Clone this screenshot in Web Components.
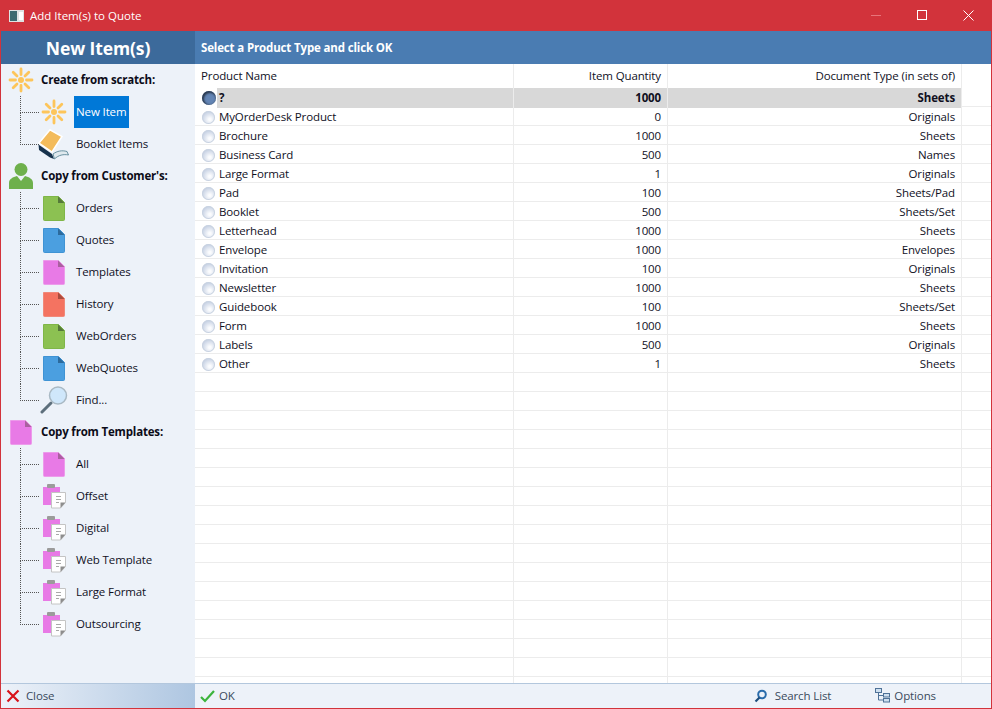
<!DOCTYPE html>
<html>
<head>
<meta charset="utf-8">
<title>Add Item(s) to Quote</title>
<style>
  html, body { margin: 0; height: 100%; }
  body { font: 11.5px "Open Sans", sans-serif; letter-spacing: -0.12px; color: #10101e; overflow: hidden; }
</style>
</head>
<body>
<quote-window></quote-window>
<script>
const icons = {
  spark: `<svg viewBox="0 0 26 26" width="26" height="26"><g stroke="#fdc55a" stroke-width="2.800" stroke-linecap="round"><path d="M13 2v5.500M13 18.500V24M2 13h5.500M18.500 13H24M5.200 5.200l3.800 3.800M17 17l3.800 3.800M5.200 20.800 9 17M17 9l3.800-3.800"/></g><circle cx="13" cy="13" r="3" fill="#fdc55a"/></svg>`,
  book: `<svg viewBox="0 0 31 31" width="31" height="31"><path d="M12 .8 1 14l13 9L24 7.500z" fill="#f3bb5b" stroke="#fff" stroke-width="1.500"/><path d="M.5 15.500 14 25l2 5-4-1.500L1 21z" fill="#17324d"/><path d="M15 25c4-3 9-4 14-2.500l1.500 3.500c-5-1-10 0-14 4z" fill="#dfe9ee" stroke="#4a7a8c" stroke-width=".8"/></svg>`,
  user: `<svg viewBox="0 0 24 28" width="24" height="28"><circle cx="12" cy="7.500" r="6.500" fill="#6eb04c"/><path d="M0 27v-6c0-4 4-6 8-7l4 5 4-5c4 1 8 3 8 7v6z" fill="#6eb04c"/></svg>`,
  glass: `<svg viewBox="0 0 28 28" width="28" height="28"><path d="M2 26l9-9" stroke="#5d6f7c" stroke-width="3" stroke-linecap="round"/><circle cx="18" cy="9.500" r="8.500" fill="#cfe7fb" stroke="#a9b9c4" stroke-width="1.500"/></svg>`,
  clip: `<svg viewBox="0 0 24 25" width="24" height="25"><rect x="1" y="3" width="17" height="18" fill="#e87ae6"/><rect x="5" y="0" width="8" height="4" rx="1" fill="#9b9b9b"/><path d="M9.500 8.500h14v10l-5 5.500h-9z" fill="#fff" stroke="#c4c4c4"/><path d="M18.500 24v-5.500h5z" fill="#8d8d8d"/><path d="M14 12.500h5M14 15.500h5M14 18.500h3" stroke="#a9a9a9"/></svg>`,
};
const sheet = (fill, fold, edge) => `<svg viewBox="0 0 24 27" width="24" height="27"><path d="M1.500 1.500h15l6 6v17a1 1 0 0 1-1 1h-19a1 1 0 0 1-1-1z" fill="${fill}" stroke="${edge}"/><path d="M16 1.500l6.500 6.500H16z" fill="${fold}"/></svg>`;
icons.green = sheet('#8cc152', '#55793a', '#7fb648');
icons.blue = sheet('#4b9fe0', '#2c6a9c', '#3f93d4');
icons.pink = sheet('#e87ae6', '#a9609f', '#ec9bea');
icons.red = sheet('#f47361', '#a84c3f', '#f0897a');

class TitleBar extends HTMLElement {
  constructor() {
    super();
    this.attachShadow({ mode: 'open' });
    this.shadowRoot.innerHTML = `
      <style>
        :host { display: flex; align-items: center; height: 31px; background: #d2333b; color: #fff; letter-spacing: 0; }
        .app { margin: 0 6px 0 8px; display: block; }
        .name { flex: 1; }
        .btn { width: 46px; height: 30px; margin-bottom: 1px; display: flex; align-items: center; justify-content: center; }
      </style>
      <svg class="app" width="15" height="12" viewBox="0 0 15 12"><rect width="15" height="12" fill="#dfe3e3"/><rect x="1" y="1" width="7" height="10" fill="#3d6b70"/><rect x="10" y="2" width="4" height="8" fill="#fff"/></svg>
      <span class="name"><slot></slot></span>
      <span class="btn"><svg width="10" height="10"><path d="M0 5.500h10" stroke="#e8747a"/></svg></span>
      <span class="btn"><svg width="10" height="10"><rect x=".5" y=".5" width="9" height="9" fill="none" stroke="#fff"/></svg></span>
      <span class="btn"><svg width="11" height="11"><path d="M.5.500l10 10M10.500.500l-10 10" stroke="#fff"/></svg></span>
    `;
  }
}

class TreeGroup extends HTMLElement {
  constructor() {
    super();
    this.attachShadow({ mode: 'open' });
    this.shadowRoot.innerHTML = `
      <style>
        :host { display: block; }
        .head { display: flex; align-items: center; height: 32px; font-weight: 700; letter-spacing: -0.18px; padding-left: 6px; gap: 7px; color: #0c0c18; }
        .icon { width: 27px; display: flex; justify-content: center; }
        #t { padding-bottom: 1px; }
        .kids { display: block; margin-left: 19px; }
      </style>
      <div class="head"><span class="icon" id="i"></span><span id="t"></span></div>
      <div class="kids"><slot></slot></div>
    `;
    this.shadowRoot.getElementById('i').innerHTML = icons[this.getAttribute('icon')];
    this.shadowRoot.getElementById('t').textContent = this.getAttribute('label');
  }
}

class TreeItem extends HTMLElement {
  constructor() {
    super();
    this.attachShadow({ mode: 'open' });
    this.shadowRoot.innerHTML = `
      <style>
        :host { display: flex; align-items: center; height: 32px; }
        .branch { width: 19px; height: 32px; flex: none; display: grid; grid-template-rows: 17px 15px; }
        .top { border-left: 1px dotted #555; border-bottom: 1px dotted #555; }
        .bot { border-left: 1px dotted #555; }
        :host(:last-child) .bot { border-left: 0; }
        .icon { width: 29px; flex: none; display: flex; justify-content: center; }
        .icon svg { flex: none; }
        .txt { margin-left: 6px; padding: 0 3px 2px 2px; height: 32px; box-sizing: border-box; display: flex; align-items: center; }
        :host([selected]) .txt { background: #0078d7; color: #fff; }
      </style>
      <span class="branch"><span class="top"></span><span class="bot"></span></span><span class="icon" id="i"></span><span class="txt"><slot></slot></span>
    `;
    this.shadowRoot.getElementById('i').innerHTML = icons[this.getAttribute('icon')];
  }
}

class SideBar extends HTMLElement {
  constructor() {
    super();
    this.attachShadow({ mode: 'open' });
    this.shadowRoot.innerHTML = `
      <style>
        :host { display: block; width: 194px; background: #edf2f9; }
        h1 { margin: 0; height: 33px; line-height: 34px; text-align: center; background: #3c6a9b; color: #fff; font-size: 17.5px; font-weight: 700; letter-spacing: -0.1px; }
      </style>
      <h1>New Item(s)</h1>
      <slot></slot>
    `;
  }
}

class GridRow extends HTMLElement {
  constructor() {
    super();
    this.attachShadow({ mode: 'open' });
    this.shadowRoot.innerHTML = `
      <style>
        :host { display: grid; grid-template-columns: 319px 154px 294px 29px; height: 19px; line-height: 20px; box-sizing: border-box; border-bottom: 1px solid #ececec; }
        .c { border-right: 1px solid #ececec; padding: 0 6px 0 5px; white-space: nowrap; }
        .n { display: flex; align-items: center; padding: 0 0 0 7px; gap: 4px; }
        .r { text-align: right; }
        .radio { width: 13px; height: 13px; border-radius: 50%; background: radial-gradient(circle at 60% 65%, #fbfcfe 10%, #b4c2da 90%); box-shadow: inset 0 0 0 1px #c9d3e1; flex: none; }
        :host([selected]) { font-weight: 700; }
        :host([selected]) .n { gap: 1px; background: linear-gradient(90deg, #fff 22px, #d8d8d8 22px); }
        :host([selected]) .radio { width: 14px; height: 14px; background: #6385b5; box-shadow: inset 1px 1px 2px 1px #2b3a50; }
        :host([selected]) .g { padding-left: 2px; }
        :host([selected]) .r { background: #d8d8d8; }
      </style>
      <div class="c n">${this.hasAttribute('blank') ? '' : '<span class="radio"></span>'}<span class="g">${this.getAttribute('name') || ''}</span></div>
      <div class="c r">${this.getAttribute('qty') || ''}</div>
      <div class="c r">${this.getAttribute('doc') || ''}</div>
      <div class="c" style="border:0"></div>
    `;
  }
}

class ProductGrid extends HTMLElement {
  constructor() {
    super();
    this.attachShadow({ mode: 'open' });
    const rows = [
      ['MyOrderDesk Product', 0, 'Originals'], ['Brochure', 1000, 'Sheets'], ['Business Card', 500, 'Names'],
      ['Large Format', 1, 'Originals'], ['Pad', 100, 'Sheets/Pad'], ['Booklet', 500, 'Sheets/Set'],
      ['Letterhead', 1000, 'Sheets'], ['Envelope', 1000, 'Envelopes'], ['Invitation', 100, 'Originals'],
      ['Newsletter', 1000, 'Sheets'], ['Guidebook', 100, 'Sheets/Set'], ['Form', 1000, 'Sheets'],
      ['Labels', 500, 'Originals'], ['Other', 1, 'Sheets'],
    ];
    const blanks = Array.from({ length: 17 }).map(() => '<grid-row blank></grid-row>').join('');
    this.shadowRoot.innerHTML = `
      <style>
        :host { display: block; flex: 1; min-height: 0; overflow: hidden; background: #fff; }
        .hdr { display: grid; grid-template-columns: 319px 154px 294px 29px; height: 24px; line-height: 24px; }
        .hdr div { padding: 0 6px; border-right: 1px solid #ececec; }
        .hdr div:last-child { border: 0; }
        .r { text-align: right; }
      </style>
      <div class="hdr"><div>Product Name</div><div class="r">Item Quantity</div><div class="r">Document Type (in sets of)</div><div></div></div>
      <grid-row selected name="?" qty="1000" doc="Sheets"></grid-row>
      ${rows.map((r) => `<grid-row name="${r[0]}" qty="${r[1]}" doc="${r[2]}"></grid-row>`).join('')}
      ${blanks}
    `;
  }
}

class BarButton extends HTMLElement {
  constructor() {
    super();
    this.attachShadow({ mode: 'open' });
    this.shadowRoot.innerHTML = `
      <style>
        :host { display: inline-flex; align-items: center; gap: var(--gap, 5px); color: #3a4a5c; padding-bottom: 1px; }
      </style>
      <slot name="icon"></slot><slot></slot>
    `;
  }
}

class QuoteWindow extends HTMLElement {
  constructor() {
    super();
    this.attachShadow({ mode: 'open' });
    this.shadowRoot.innerHTML = `
      <style>
        :host { display: flex; flex-direction: column; width: 992px; height: 709px; box-sizing: border-box; border: solid #d2333b; border-width: 0 1px 1px; background: #fff; }
        .main { flex: 1; display: flex; min-height: 0; }
        .right { flex: 1; display: flex; flex-direction: column; min-width: 0; }
        .prompt { height: 33px; line-height: 33px; background: #4a7cb2; color: #fff; font-weight: 700; letter-spacing: -0.15px; padding-left: 6px; }
        .foot { display: flex; height: 25px; box-sizing: border-box; border-top: 1px solid #b3c7dd; background: #edf2f9; }
        .left { width: 194px; display: flex; align-items: center; padding-left: 5px; box-sizing: border-box; background: linear-gradient(90deg, #edf2f9, #aec6e1); --gap: 6px; }
        .rest { flex: 1; display: flex; align-items: center; padding-left: 5px; --gap: 3px; }
        .search { margin-left: 519px; --gap: 8px; }
        .options { margin-left: 44px; --gap: 4px; }
      </style>
      <title-bar>Add Item(s) to Quote</title-bar>
      <div class="main">
        <side-bar>
          <tree-group icon="spark" label="Create from scratch:">
            <tree-item icon="spark" selected>New Item</tree-item>
            <tree-item icon="book">Booklet Items</tree-item>
          </tree-group>
          <tree-group icon="user" label="Copy from Customer's:">
            <tree-item icon="green">Orders</tree-item>
            <tree-item icon="blue">Quotes</tree-item>
            <tree-item icon="pink">Templates</tree-item>
            <tree-item icon="red">History</tree-item>
            <tree-item icon="green">WebOrders</tree-item>
            <tree-item icon="blue">WebQuotes</tree-item>
            <tree-item icon="glass">Find...</tree-item>
          </tree-group>
          <tree-group icon="pink" label="Copy from Templates:">
            <tree-item icon="pink">All</tree-item>
            <tree-item icon="clip">Offset</tree-item>
            <tree-item icon="clip">Digital</tree-item>
            <tree-item icon="clip">Web Template</tree-item>
            <tree-item icon="clip">Large Format</tree-item>
            <tree-item icon="clip">Outsourcing</tree-item>
          </tree-group>
        </side-bar>
        <div class="right">
          <div class="prompt">Select a Product Type and click OK</div>
          <product-grid></product-grid>
        </div>
      </div>
      <div class="foot">
        <div class="left"><bar-button><svg slot="icon" width="14" height="14"><path d="M1.500 1.500l11 11M12.500 1.500l-11 11" stroke="#d8121a" stroke-width="2.200"/></svg>Close</bar-button></div>
        <div class="rest">
          <bar-button><svg slot="icon" width="16" height="14"><path d="M1 8l4 4 9-10" fill="none" stroke="#3cb43c" stroke-width="2.200"/></svg>OK</bar-button>
          <bar-button class="search"><svg slot="icon" width="13" height="14"><circle cx="8" cy="5.500" r="3.800" fill="none" stroke="#2a6cab" stroke-width="2"/><path d="M1.500 12.500l4-4" stroke="#1d4d7c" stroke-width="2.200"/></svg>Search List</bar-button>
          <bar-button class="options"><svg slot="icon" width="15" height="15"><g fill="#cfe0f0" stroke="#4f7298"><rect x=".5" y=".5" width="6" height="4"/><rect x="8.500" y="5.500" width="6" height="3.500"/><rect x="8.500" y="10.500" width="6" height="3.500"/></g><path d="M3.500 5v7h5M3.500 7.500h5" fill="none" stroke="#4f7298"/></svg>Options</bar-button>
        </div>
      </div>
    `;
  }
}

customElements.define('title-bar', TitleBar);
customElements.define('tree-group', TreeGroup);
customElements.define('tree-item', TreeItem);
customElements.define('side-bar', SideBar);
customElements.define('grid-row', GridRow);
customElements.define('product-grid', ProductGrid);
customElements.define('bar-button', BarButton);
customElements.define('quote-window', QuoteWindow);
</script>
</body>
</html>
